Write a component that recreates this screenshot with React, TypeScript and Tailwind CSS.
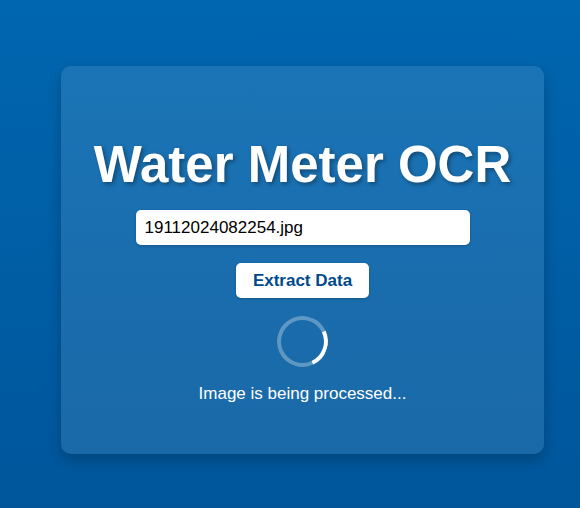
export default function App() {
  return (
    <div className="min-h-screen h-[508px] w-full bg-gradient-to-b from-[#0066b0] to-[#00569b] pl-[61px] pt-[66px] font-['Liberation_Sans',Arial,sans-serif]">
      <div className="w-[483px] rounded-[10px] bg-white/10 shadow-[0_6px_14px_rgba(0,0,0,0.22)] flex flex-col items-center pt-[70px] pb-[50px]">
        <h1 className="text-[51px] font-bold leading-[58.6px] text-white [text-shadow:2px_2px_4px_rgba(0,0,0,0.35)]">
          Water Meter OCR
        </h1>
        <input
          type="text"
          readOnly
          value="19112024082254.jpg"
          className="mt-[15.5px] h-[35px] w-[334px] rounded-[5px] bg-white px-[9px] text-[17px] text-black outline-none shadow-[0_1px_3px_rgba(0,0,0,0.2)]"
        />
        <button className="mt-[18px] h-[35px] w-[133px] rounded-[5px] bg-white text-[17px] font-bold text-[#004a8c] shadow-[0_1px_3px_rgba(0,0,0,0.2)]">
          Extract Data
        </button>
        <div className="mt-[18px] h-[51px] w-[51px] rounded-full border-4 border-white/30 border-r-white rotate-[20deg]" />
        <p className="mt-[17px] text-[17px] leading-[19.5px] text-white">
          Image is being processed...
        </p>
      </div>
    </div>
  );
}
